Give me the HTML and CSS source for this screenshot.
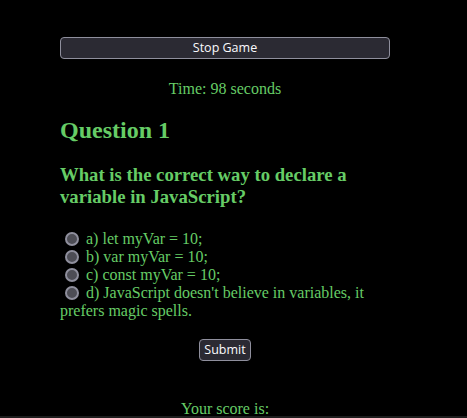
FILE: index.html
```
<!DOCTYPE html>
<html>
<head>
<meta charset="utf-8">
<link rel="stylesheet" href="styles.css">
</head>
<body>
<div class="quiz">
  <button class="btn btn-wide">Stop Game</button>
  <p class="timer">Time: 98 seconds</p>
  <h2 class="q-num">Question 1</h2>
  <h3 class="q-text">What is the correct way to declare a variable in JavaScript?</h3>
  <div class="options">
    <input type="radio" class="radio" name="opt"> a) let myVar = 10;<br>
    <input type="radio" class="radio" name="opt"> b) var myVar = 10;<br>
    <input type="radio" class="radio" name="opt"> c) const myVar = 10;<br>
    <input type="radio" class="radio" name="opt"> d) JavaScript doesn't believe in variables, it prefers magic spells.<br>
  </div>
  <div class="submit-row"><button class="btn">Submit</button></div>
  <p class="score">Your score is:</p>
</div>
<div class="bottom-strip"></div>
</body>
</html>
```
FILE: styles.css
```
html, body {
  margin: 0;
  padding: 0;
  background: #000;
  height: 418px;
  overflow: hidden;
}
body {
  font-family: "Liberation Serif", "Times New Roman", serif;
  font-size: 16px;
  color: #66cc66;
  position: relative;
}
.quiz {
  width: 330px;
  margin-left: 60px;
  padding-top: 37px;
}
.btn {
  font-family: "Open Sans", "Noto Sans", sans-serif;
  font-size: 12.5px;
  color: #fbfbfe;
  background: #2b2a33;
  border: 1px solid #8f8f9d;
  border-radius: 4px;
  padding: 2px 4px;
  height: 22px;
  line-height: 16px;
}
.btn-wide {
  display: block;
  width: 100%;
}
.timer {
  text-align: center;
  margin: 21px 0 16px;
}
.q-num {
  font-size: 24px;
  margin: 19px 0 20px;
}
.q-text {
  font-size: 18.72px;
  margin: 20px 0 22px;
}
.options {
  line-height: 18px;
}
.radio {
  appearance: none;
  width: 14px;
  height: 14px;
  margin: 0 3px 0 5px;
  border: 2px solid #8f8f9d;
  border-radius: 50%;
  background: #4d4d55;
  box-sizing: border-box;
  vertical-align: -2px;
}
.submit-row {
  text-align: center;
  margin-top: 19px;
}
.score {
  text-align: center;
  margin: 39px 0 0;
}
.bottom-strip {
  position: absolute;
  left: 0;
  right: 0;
  top: 416px;
  height: 2px;
  background: #1e1e1e;
}
```
